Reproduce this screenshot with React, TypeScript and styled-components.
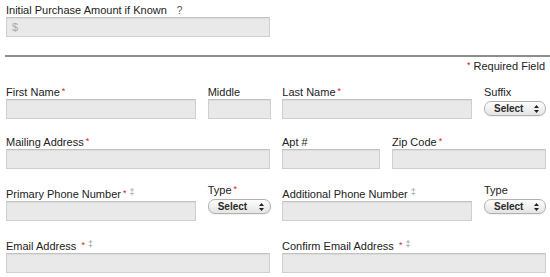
import styled, { createGlobalStyle } from "styled-components";

const GlobalStyle = createGlobalStyle`
  body {
    margin: 0;
    background: #ffffff;
    font-family: "Liberation Sans", Arial, Helvetica, sans-serif;
    color: #222;
  }
`;

const Page = styled.form`
  width: 540px;
  padding: 2px 4px 0 6px;
`;

const Label = styled.label`
  display: block;
  font-size: 11px;
  line-height: 14px;
  height: 14px;
  padding-top: 1px;
  white-space: nowrap;
  color: #222;
`;

const Req = styled.span`
  color: #e3121b;
  font-size: 9px;
  line-height: 0;
  vertical-align: 2px;
  margin-left: 2px;
`;

const Dagger = styled.span`
  color: #9a9a9a;
  font-size: 9px;
  line-height: 0;
  vertical-align: 3px;
  margin-left: 3px;
`;

const Help = styled.span`
  color: #555;
  font-size: 10px;
  margin-left: 10px;
`;

const Input = styled.input<{ $w?: number }>`
  display: block;
  box-sizing: border-box;
  width: ${(p) => (p.$w ? `${p.$w}px` : "100%")};
  height: 20px;
  margin: 0;
  padding: 0 5px;
  background: #e9e9e9;
  border: 1px solid #cfcfcf;
  border-top-color: #c2c2c2;
  box-shadow: inset 0 1px 1px rgba(0, 0, 0, 0.06);
  font-family: inherit;
  font-size: 11px;
  color: #333;

  &::placeholder {
    color: #a8a8a8;
  }
`;

const SelectBox = styled.div`
  box-sizing: border-box;
  display: flex;
  align-items: center;
  justify-content: space-between;
  width: 100%;
  height: 15px;
  margin-top: 2px;
  padding: 0 6px 0 9px;
  border: 1px solid #b0b0b0;
  border-radius: 7px;
  background: linear-gradient(#fdfdfd, #e4e4e4);
  box-shadow: 0 1px 1px rgba(0, 0, 0, 0.06);
  font-size: 10px;
  font-weight: bold;
  color: #2a2a2a;
`;

const Divider = styled.hr`
  margin: 18px -4px 0 -1px;
  border: 0;
  border-top: 2px solid #8d8d8d;
  height: 0;
`;

const Note = styled.div`
  text-align: right;
  font-size: 11px;
  line-height: 14px;
  margin-top: 2px;
  padding-right: 1px;
`;

const Row = styled.div<{ $cols: string; $top: number }>`
  display: grid;
  grid-template-columns: ${(p) => p.$cols};
  justify-content: space-between;
  align-items: start;
  margin-top: ${(p) => p.$top}px;
`;

// select cells in the phone row sit a little higher than the inputs
const Cell = styled.div<{ $raised?: boolean }>`
  margin-top: ${(p) => (p.$raised ? "-4px" : "0")};
`;

function Select() {
  return (
    <SelectBox>
      Select
      <svg width="5" height="8" viewBox="0 0 5 8">
        <path d="M2.5 0 L5 3 L0 3 Z M0 5 L5 5 L2.5 8 Z" fill="#222" />
      </svg>
    </SelectBox>
  );
}

export default function App() {
  return (
    <>
      <GlobalStyle />
      <Page>
        <Label>
          Initial Purchase Amount if Known
          <Help>?</Help>
        </Label>
        <Input $w={264} placeholder="$" />

        <Divider />
        <Note>
          <Req>*</Req> Required Field
        </Note>

        <Row $cols="190px 63px 190px 62px" $top={11}>
          <Cell>
            <Label>
              First Name<Req>*</Req>
            </Label>
            <Input />
          </Cell>
          <Cell>
            <Label>Middle</Label>
            <Input />
          </Cell>
          <Cell>
            <Label>
              Last Name<Req>*</Req>
            </Label>
            <Input />
          </Cell>
          <Cell>
            <Label>Suffix</Label>
            <Select />
          </Cell>
        </Row>

        <Row $cols="264px 98px 154px" $top={15}>
          <Cell>
            <Label>
              Mailing Address<Req>*</Req>
            </Label>
            <Input />
          </Cell>
          <Cell>
            <Label>Apt #</Label>
            <Input />
          </Cell>
          <Cell>
            <Label>
              Zip Code<Req>*</Req>
            </Label>
            <Input />
          </Cell>
        </Row>

        <Row $cols="190px 63px 190px 62px" $top={17}>
          <Cell>
            <Label>
              Primary Phone Number<Req>*</Req>
              <Dagger>‡</Dagger>
            </Label>
            <Input />
          </Cell>
          <Cell $raised>
            <Label>
              Type<Req>*</Req>
            </Label>
            <Select />
          </Cell>
          <Cell>
            <Label>
              Additional Phone Number<Dagger>‡</Dagger>
            </Label>
            <Input />
          </Cell>
          <Cell $raised>
            <Label>Type</Label>
            <Select />
          </Cell>
        </Row>

        <Row $cols="264px 264px" $top={17}>
          <Cell>
            <Label>
              Email Address <Req>*</Req>
              <Dagger>‡</Dagger>
            </Label>
            <Input />
          </Cell>
          <Cell>
            <Label>
              Confirm Email Address <Req>*</Req>
              <Dagger>‡</Dagger>
            </Label>
            <Input />
          </Cell>
        </Row>
      </Page>
    </>
  );
}
